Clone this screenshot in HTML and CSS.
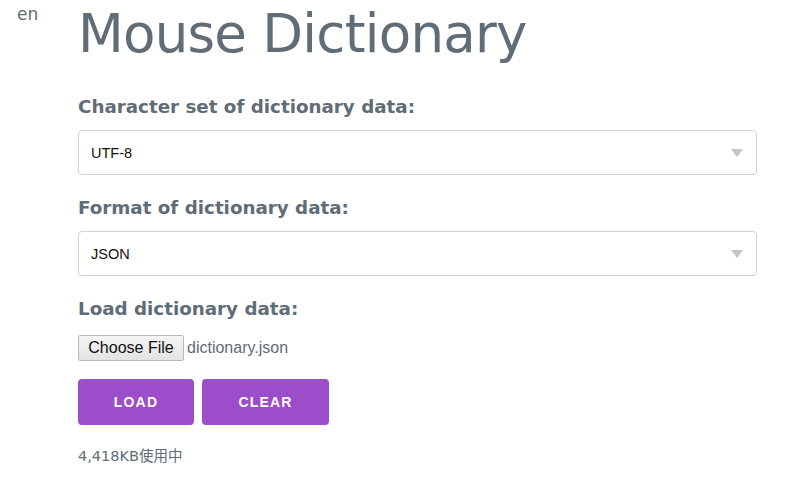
FILE: index.html
```html
<!DOCTYPE html>
<html>
<head>
<meta charset="utf-8">
<link rel="stylesheet" href="styles.css">
</head>
<body>
<div class="page">
  <div class="side"><span class="lang">en</span></div>
  <main class="main">
    <h1 class="title">Mouse Dictionary</h1>
    <label class="label">Character set of dictionary data:</label>
    <div class="select"><span>UTF-8</span><span class="arrow"></span></div>
    <label class="label">Format of dictionary data:</label>
    <div class="select"><span>JSON</span><span class="arrow"></span></div>
    <label class="label">Load dictionary data:</label>
    <div class="file"><span class="file-btn">Choose File</span><span class="file-name">dictionary.json</span></div>
    <div class="buttons">
      <button class="btn btn-load">LOAD</button>
      <button class="btn btn-clear">CLEAR</button>
    </div>
    <div class="usage">4,418KB使用中</div>
  </main>
</div>
</body>
</html>
```
FILE: styles.css
```css
html, body { margin: 0; padding: 0; background: #fff; }
body { font-family: "DejaVu Sans", Verdana, sans-serif; color: #606c76; }
.page { display: flex; width: 800px; height: 480px; overflow: hidden; }
.side { width: 78px; flex: none; padding: 2px 0 0 17px; box-sizing: border-box; }
.lang { font-size: 17px; line-height: 24px; color: #606c76; }
.main { width: 679px; display: flex; flex-direction: column; }
.title { font-weight: 400; font-size: 53px; margin: 0; padding-top: 3px; line-height: 62px; height: 71px; letter-spacing: -0.75px; white-space: nowrap; }
.label { font-weight: 700; font-size: 18.3px; line-height: 24px; margin: 21px 0 11px; display: block; }
.select { height: 45px; box-sizing: border-box; border: 1px solid #d1d1d1; border-radius: 4px; display: flex; align-items: center; justify-content: space-between; padding: 0 13px 0 12px; font-family: "Liberation Sans", Arial, sans-serif; font-size: 14.5px; color: #111; }
.arrow { width: 0; height: 0; border-left: 6px solid transparent; border-right: 6px solid transparent; border-top: 8px solid #c5c5c5; }
.file { display: flex; align-items: center; height: 26px; margin-top: 3px; font-family: "Liberation Sans", Arial, sans-serif; font-size: 16px; }
.file-btn { height: 26px; box-sizing: border-box; width: 106px; border: 1px solid #b8b8b8; background: linear-gradient(#f5f5f5, #e3e3e3); color: #111; display: flex; align-items: center; justify-content: center; border-radius: 2px; }
.file-name { margin-left: 3px; color: #606c76; }
.buttons { display: flex; gap: 8px; margin-top: 18px; }
.btn { height: 46px; border: none; border-radius: 4px; background: #9b4dca; color: #fff; font-family: "Liberation Sans", Arial, sans-serif; font-weight: 700; font-size: 14px; letter-spacing: 1.2px; padding: 0; }
.btn-load { width: 116px; }
.btn-clear { width: 127px; }
.usage { margin-top: 19px; font-size: 14.5px; font-family: "DejaVu Sans", "Noto Sans CJK JP", sans-serif; color: #606c76; }
```
